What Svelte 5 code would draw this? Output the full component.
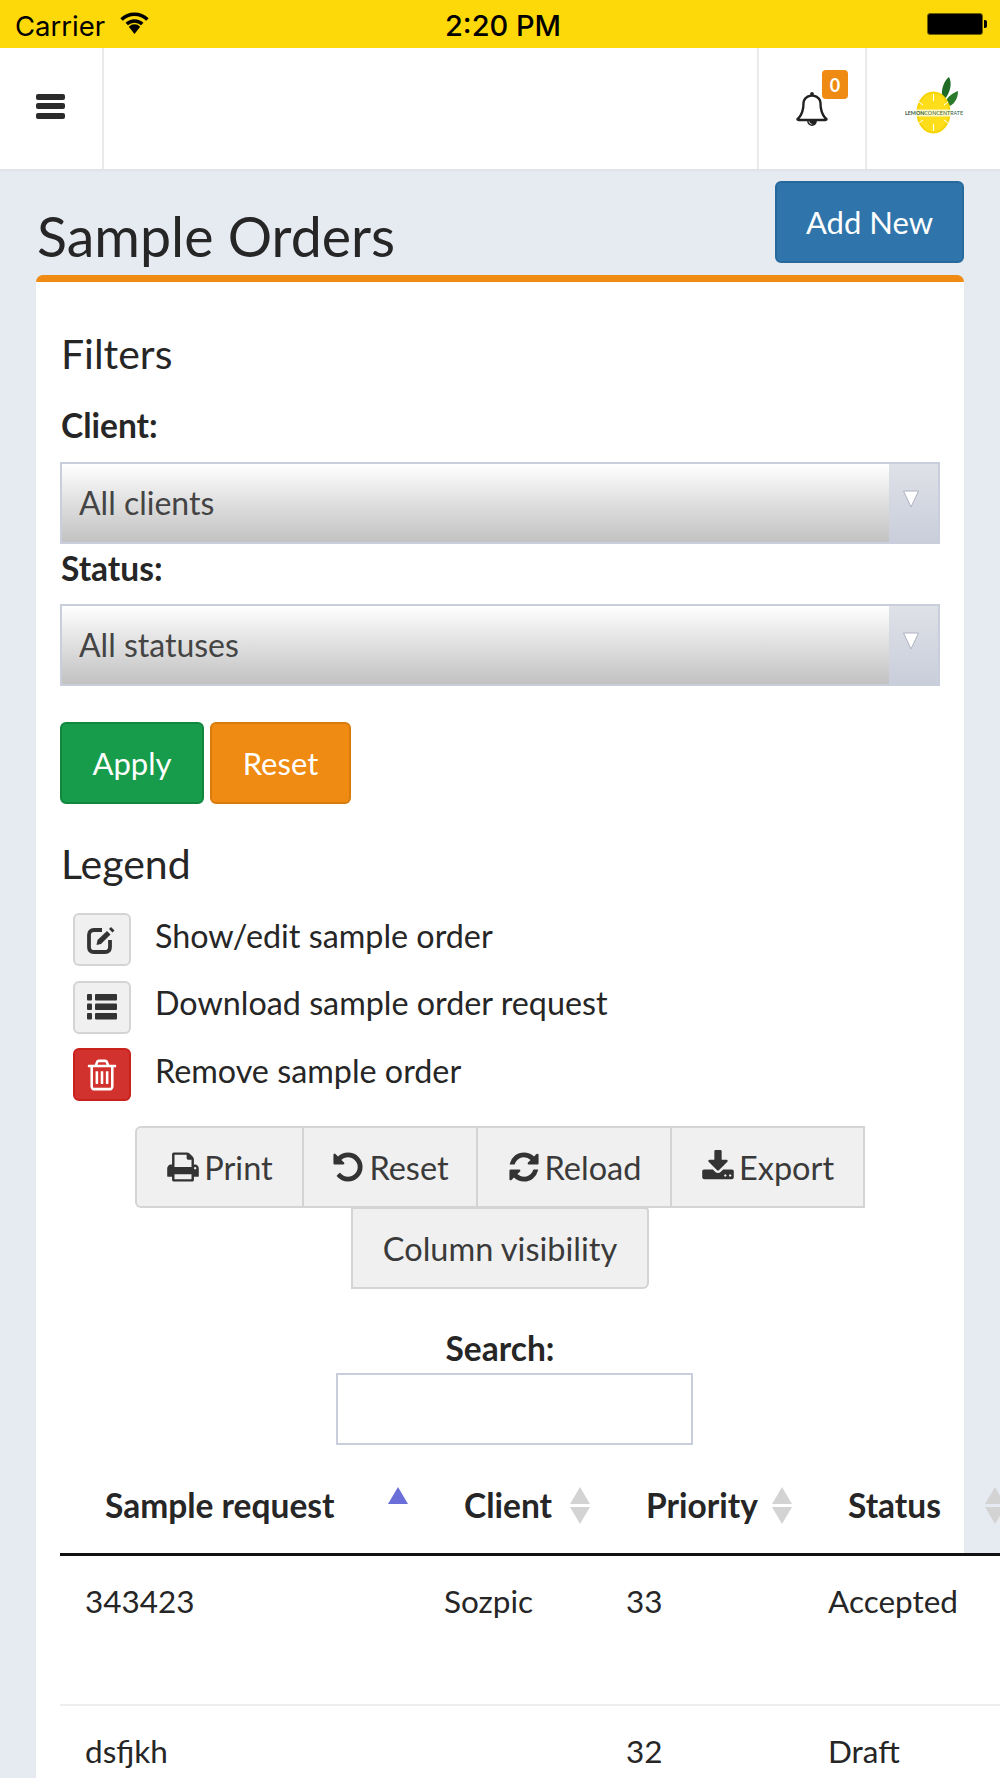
<script lang="ts">
	const legend = [
		{ label: 'Show/edit sample order', kind: 'edit' },
		{ label: 'Download sample order request', kind: 'list' },
		{ label: 'Remove sample order', kind: 'trash' },
	];
	const columns = [
		{ title: 'Sample request', sort: 'asc' },
		{ title: 'Client', sort: 'both' },
		{ title: 'Priority', sort: 'both' },
		{ title: 'Status', sort: 'both' },
	];
	const rows = [
		['343423', 'Sozpic', '33', 'Accepted'],
		['dsfjkh', '', '32', 'Draft'],
	];
	const paths: Record<string, string> = {
		bell: 'M912 1696q0-16-16-16-59 0-101.5-42.5t-42.5-101.5q0-16-16-16t-16 16q0 73 51.5 124.5t124.5 51.5q16 0 16-16zm-666-288h1300q-266-300-266-832 0-51-24-105t-69-103-121.5-80.5-169.5-31.5-169.5 31.5-121.5 80.5-69 103-24 105q0 532-266 832zm1482 0q0 52-38 90t-90 38h-448q0 106-75 181t-181 75-181-75-75-181h-448q-52 0-90-38t-38-90q50-42 91-88t85-119.5 74.5-158.5 50-206 19.5-260q0-152 117-282.5t307-158.5q-8-19-8-39 0-40 28-68t68-28 68 28 28 68q0 20-8 39 190 28 307 158.5t117 282.5q0 139 19.5 260t50 206 74.5 158.5 85 119.5 91 88z',
		trash: 'M704 736v576q0 14-9 23t-23 9h-64q-14 0-23-9t-9-23v-576q0-14 9-23t23-9h64q14 0 23 9t9 23zm256 0v576q0 14-9 23t-23 9h-64q-14 0-23-9t-9-23v-576q0-14 9-23t23-9h64q14 0 23 9t9 23zm256 0v576q0 14-9 23t-23 9h-64q-14 0-23-9t-9-23v-576q0-14 9-23t23-9h64q14 0 23 9t9 23zm128 724v-948h-896v948q0 22 7 40.5t14.5 27 10.5 8.5h832q3 0 10.5-8.5t14.5-27 7-40.5zm-672-1076h448l-48-117q-7-9-17-11h-317q-10 2-17 11zm928 32v64q0 14-9 23t-23 9h-96v948q0 83-47 143.5t-113 60.5h-832q-66 0-113-58.5t-47-141.5v-952h-96q-14 0-23-9t-9-23v-64q0-14 9-23t23-9h309l70-167q15-37 54-63t79-26h320q40 0 79 26t54 63l70 167h309q14 0 23 9t9 23z',
		print: 'M448 1536h896v-256h-896v256zm0-640h896v-384h-160q-40 0-68-28t-28-68v-160h-640v640zm1152 64q0-26-19-45t-45-19-45 19-19 45 19 45 45 19 45-19 19-45zm128 0v416q0 13-9.5 22.5t-22.5 9.5h-224v160q0 40-28 68t-68 28h-960q-40 0-68-28t-28-68v-160h-224q-13 0-22.5-9.5t-9.5-22.5v-416q0-79 56.5-135.5t135.5-56.5h64v-544q0-40 28-68t68-28h672q40 0 88 20t76 48l152 152q28 28 48 76t20 88v256h64q79 0 135.5 56.5t56.5 135.5z',
		undo: 'M1664 896q0 156-61 298t-164 245-245 164-298 61q-172 0-327-72.5t-264-204.5q-7-10-6.5-22.5t8.5-20.5l137-138q10-9 25-9 16 2 23 12 73 95 179 147t225 52q104 0 198.5-40.5t163.5-109.5 109.5-163.5 40.5-198.5-40.5-198.5-109.5-163.5-163.5-109.5-198.5-40.5q-98 0-188 35.5t-160 101.5l137 138q31 30 14 69-17 40-59 40h-448q-26 0-45-19t-19-45v-448q0-42 40-59 39-17 69 14l130 129q107-101 244.5-156.5t284.5-55.5q156 0 298 61t245 164 164 245 61 298z',
		refresh: 'M1639 1056q0 5-1 7-64 268-268 434.5t-478 166.5q-146 0-282.5-55t-243.5-157l-129 129q-19 19-45 19t-45-19-19-45v-448q0-26 19-45t45-19h448q26 0 45 19t19 45-19 45l-137 137q71 66 161 102t187 36q134 0 250-65t186-179q11-17 53-117 8-23 30-23h192q13 0 22.5 9.5t9.5 22.5zm25-800v448q0 26-19 45t-45 19h-448q-26 0-45-19t-19-45 19-45l138-138q-148-137-349-137-134 0-250 65t-186 179q-11 17-53 117-8 23-30 23h-199q-13 0-22.5-9.5t-9.5-22.5v-7q65-268 270-434.5t480-166.5q146 0 284 55.5t245 156.5l130-129q19-19 45-19t45 19 19 45z',
		download: 'M1344 1344q0-26-19-45t-45-19-45 19-19 45 19 45 45 19 45-19 19-45zm256 0q0-26-19-45t-45-19-45 19-19 45 19 45 45 19 45-19 19-45zm128-224v320q0 40-28 68t-68 28h-1472q-40 0-68-28t-28-68v-320q0-40 28-68t68-28h465l135 136q58 56 136 56t136-56l136-136h464q40 0 68 28t28 68zm-325-569q17 41-14 70l-448 448q-18 19-45 19t-45-19l-448-448q-31-29-14-70 17-39 59-39h256v-448q0-26 19-45t45-19h256q26 0 45 19t19 45v448h256q42 0 59 39z',
	};
	const tools = [
		{ label: 'Print', icon: 'print' },
		{ label: 'Reset', icon: 'undo' },
		{ label: 'Reload', icon: 'refresh' },
		{ label: 'Export', icon: 'download' },
	];
</script>

<div class="screen">
	<div class="statusbar">
		<div class="sb-left">
			<span>Carrier</span>
			<svg class="wifi" viewBox="0 0 28 22" width="29" height="23">
				<path d="M1.5 8 A18 18 0 0 1 26.500 8" fill="none" stroke="#000" stroke-width="3.400" />
				<path d="M6.500 12.500 A11 11 0 0 1 21.500 12.500" fill="none" stroke="#000" stroke-width="3.400" />
				<path d="M8.500 15 L14 22 L19.500 15 A8 8 0 0 0 8.500 15 Z" fill="#000" />
			</svg>
		</div>
		<div class="sb-time">2:20 PM</div>
		<div class="battery"><span class="battery-body"></span><span class="battery-nub"></span></div>
	</div>

	<nav class="navbar">
		<div class="nav-cell burger">
			<span></span><span></span><span></span>
		</div>
		<div class="nav-fill"></div>
		<div class="nav-cell bell">
			<svg viewBox="0 0 1792 1792" width="34" height="34"><path d={paths.bell} fill="#222" /></svg>
			<span class="count">0</span>
		</div>
		<div class="nav-cell logo">
			<svg viewBox="0 0 60 64" width="60" height="64">
				<path d="M37 20 C36 10 40 3 44 0 C47 6 46 14 40 22 Z" fill="#1d6b25" />
				<path d="M41 24 C43 19 48 16 53 14 C53 21 50 26 45 29 Z" fill="#2a7a2c" />
				<ellipse cx="28.500" cy="35.500" rx="16" ry="20" fill="#fede1b" stroke="#f6d400" stroke-width="2" />
				<path d="M28.500 17 V24 M28.500 47 V54 M14 25 L18 28 M43 25 L39 28 M14 46 L18 43 M43 46 L39 43" stroke="#fff" stroke-width="1" />
				<rect x="0" y="32.500" width="60" height="7" fill="#fff" opacity="0.75" />
				<text x="0" y="38" class="logo-text" textLength="58" lengthAdjust="spacingAndGlyphs"><tspan font-weight="700">LEMON</tspan>CONCENTRATE</text>
			</svg>
		</div>
	</nav>

	<main class="page">
		<header class="page-head">
			<h1>Sample Orders</h1>
			<button class="btn primary add">Add New</button>
		</header>

		<section class="card">
			<h2>Filters</h2>
			<label class="field-label" for="client">Client:</label>
			<div class="select">
				<select id="client"><option>All clients</option></select>
				<span class="select-arrow">
					<svg viewBox="0 0 18 18" width="18" height="18"><path d="M1.500 1 H16.500 L9 17 Z" fill="#fff" stroke="#aeb3c0" stroke-width="1" /></svg>
				</span>
			</div>
			<label class="field-label status-label" for="status">Status:</label>
			<div class="select">
				<select id="status"><option>All statuses</option></select>
				<span class="select-arrow">
					<svg viewBox="0 0 18 18" width="18" height="18"><path d="M1.500 1 H16.500 L9 17 Z" fill="#fff" stroke="#aeb3c0" stroke-width="1" /></svg>
				</span>
			</div>

			<div class="actions">
				<button class="btn success">Apply</button>
				<button class="btn warning">Reset</button>
			</div>

			<h2 class="legend-title">Legend</h2>
			<ul class="legend">
				{#each legend as item}
					<li>
						<span class="legend-icon" class:danger={item.kind === 'trash'}>
							{#if item.kind === 'edit'}
								<svg viewBox="0 0 30 28" width="30" height="28">
									<path d="M15 4 H7 Q2 4 2 9 V21 Q2 26 7 26 H18 Q23 26 23 21 V14" fill="none" stroke="#333" stroke-width="3.800" />
									<path d="M9.500 19 L10.500 14 L20 5 L23.500 8.500 L14 18 Z" fill="#333" />
									<path d="M22 3 L24 1 L27.500 4.500 L25.500 6.500 Z" fill="#333" />
								</svg>
							{:else if item.kind === 'list'}
								<svg viewBox="0 0 30 26" width="30" height="26">
									<rect x="0" y="0" width="5" height="6.500" rx="1" /><rect x="8" y="0" width="22" height="6.500" rx="1" />
									<rect x="0" y="9.500" width="5" height="6.500" rx="1" /><rect x="8" y="9.500" width="22" height="6.500" rx="1" />
									<rect x="0" y="19" width="5" height="6.500" rx="1" /><rect x="8" y="19" width="22" height="6.500" rx="1" />
								</svg>
							{:else}
								<svg viewBox="0 0 1792 1792" width="36" height="36"><path d={paths.trash} /></svg>
							{/if}
						</span>
						<span class="legend-label">{item.label}</span>
					</li>
				{/each}
			</ul>

			<div class="toolbar">
				<div class="tool-row">
					{#each tools as tool}
						<button class="tool">
							<svg viewBox="0 0 1792 1792" width="34" height="34"><path d={paths[tool.icon]} /></svg>
							{tool.label}
						</button>
					{/each}
				</div>
				<button class="tool single">Column visibility</button>
			</div>

			<div class="search">
				<label for="q">Search:</label>
				<input id="q" type="search" />
			</div>

			<table>
				<colgroup><col class="c1" /><col class="c2" /><col class="c3" /><col class="c4" /></colgroup>
				<thead>
					<tr>
						{#each columns as col}
							<th>
								{col.title}
								<span class="up" class:active={col.sort === 'asc'}></span>
								{#if col.sort === 'both'}<span class="down"></span>{/if}
							</th>
						{/each}
					</tr>
				</thead>
				<tbody>
					{#each rows as row}
						<tr>
							{#each row as cell}<td>{cell}</td>{/each}
						</tr>
					{/each}
				</tbody>
			</table>
		</section>
	</main>
</div>

<style>
	:global(body) { margin: 0; }
	.screen {
		width: 1000px; height: 1778px; overflow: hidden; background: #e6ebf2;
		font-family: Lato, "Open Sans", sans-serif; color: #262626;
	}

	.statusbar {
		height: 48px; background: #fed90a; color: #000; display: grid; grid-template-columns: 1fr auto 1fr;
		align-items: center; padding: 3px 13px 0 15px; box-sizing: border-box; font-family: Inter, sans-serif; font-size: 27.500px;
	}
	.sb-left { display: flex; align-items: center; gap: 15px; }
	.wifi { margin-top: -6px; }
	.sb-time { font-weight: 500; font-size: 29px; margin-left: 4px; }
	.battery { justify-self: end; display: flex; align-items: center; gap: 1px; margin-top: -3px; }
	.battery-body { width: 56px; height: 22px; background: #000; border: 1px solid #6f6100; border-radius: 3px; box-sizing: border-box; }
	.battery-nub { width: 3px; height: 8px; background: #000; border-radius: 0 2px 2px 0; }

	.navbar { height: 121px; background: #fff; display: flex; box-shadow: 0 2px 2px #dde1e8; position: relative; }
	.nav-cell { display: flex; align-items: center; justify-content: center; position: relative; }
	.burger { width: 104px; border-right: 2px solid #eaeaea; flex-direction: column; gap: 3.500px; padding: 0 2px 5px 0; box-sizing: border-box; }
	.burger span { width: 29px; height: 6px; background: #2b2b2b; border-radius: 2px; }
	.nav-fill { flex: 1; }
	.bell { width: 108px; border-left: 2px solid #eaeaea; box-sizing: border-box; }
	.count {
		position: absolute; left: 63px; top: 22px; width: 26px; height: 29px; border-radius: 4px; background: #ef8b12;
		color: #fff; font-size: 18px; font-weight: 700; display: flex; align-items: center; justify-content: center;
	}
	.logo { width: 135px; border-left: 2px solid #eaeaea; justify-content: flex-start; padding-left: 38px; box-sizing: border-box; }
	.logo svg { overflow: visible; }
	.logo-text { font-size: 5.400px; fill: #2e5c37; font-family: Lato, sans-serif; }

	.page { padding: 12px 36px 0; }
	.page-head { display: flex; justify-content: space-between; align-items: flex-start; }
	h1 { font-size: 55.500px; font-weight: 400; line-height: 55px; margin: 27px 0 0 1px; }
	.btn { border-radius: 6px; color: #fff; font: inherit; font-size: 31px; height: 82px; box-sizing: border-box; }
	.primary { background: #2f75ab; border: 2px solid #28699b; }
	.add { width: 189px; }

	.card {
		margin-top: 12px; background: #fff; border-top: 7px solid #ef8b12; border-radius: 7px 7px 0 0;
		padding: 50px 24px 0; height: 1600px; box-sizing: border-box; box-shadow: 0 1px 2px #dfe3ea;
	}
	h2 { font-size: 41px; font-weight: 400; line-height: 44px; margin: 0 0 0 1px; }
	.field-label { display: block; font-size: 33.500px; font-weight: 700; line-height: 36px; margin: 31px 0 19px 1px; }
	.status-label { margin: 6px 0 18px 1px; }
	.select { position: relative; height: 82px; }
	select {
		display: block; width: 100%; height: 100%; appearance: none; border: 2px solid #c9cedc; border-radius: 0;
		background: linear-gradient(#fff 0%, #e2e2e2 45%, #c2c2c2 100%); padding: 0 0 1px 17px;
		font: inherit; font-size: 32px; color: #444;
	}
	.select-arrow {
		position: absolute; right: 2px; top: 2px; bottom: 2px; width: 49px;
		background: linear-gradient(#dfe1e7, #c9cedb); display: flex; justify-content: center;
		padding: 26px 5px 0 0; box-sizing: border-box;
	}

	.actions { display: flex; gap: 6px; margin-top: 36px; }
	.success { width: 144px; background: #169c4b; border: 2px solid #12873f; }
	.warning { width: 141px; background: #ef8b12; border: 2px solid #d97c0c; }

	.legend-title { margin-top: 38px; }
	.legend { list-style: none; margin: 27px 0 0 13px; padding: 0; font-size: 32.300px; }
	.legend li { display: flex; align-items: center; gap: 24px; height: 53px; margin-bottom: 14.500px; }
	.legend-label { padding-bottom: 9px; }
	.legend-icon {
		width: 58px; height: 53px; box-sizing: border-box; border: 2px solid #d4d4d4; border-radius: 6px; background: #f0f0f0;
		display: flex; align-items: center; justify-content: center; fill: #333;
	}
	.legend-icon.danger { background: #d2322d; border-color: #c9211c; fill: #fff; }

	.toolbar { display: flex; flex-direction: column; align-items: center; margin-top: 25px; }
	.tool-row { display: grid; grid-template-columns: 169px 174px 194px 193px; }
	.tool {
		height: 82px; box-sizing: border-box; padding: 0; background: #f0f0f0; border: 2px solid #d4d4d4; border-left-width: 0;
		font: inherit; font-size: 32.500px; color: #3a3a3a; display: flex; align-items: center; justify-content: center; gap: 4px;
	}
	.tool:first-child { border-left-width: 2px; border-radius: 6px 0 0 6px; }
	.tool svg { fill: #333; }
	.tool.single { margin-top: -1px; border-left-width: 2px; border-radius: 0 4px 6px 0; width: 298px; }

	.search { display: flex; flex-direction: column; align-items: center; margin-top: 34px; }
	.search label { font-size: 33.500px; font-weight: 700; line-height: 50px; }
	.search input {
		width: 357px; height: 72px; box-sizing: border-box; border: 2px solid #c9cedc; margin: 0 0 0 29px; background: #fff; border-radius: 0;
	}

	table { border-collapse: collapse; table-layout: fixed; width: 956px; margin-top: 0; }
	.c1 { width: 359px; } .c2 { width: 182px; } .c3 { width: 202px; } .c4 { width: 213px; }
	th {
		position: relative; text-align: left; font-size: 33.500px; font-weight: 700; padding: 30px 0 18px 45px; line-height: 60px;
		border-bottom: 3px solid #111;
	}
	td { background: #fff; font-size: 31.500px; height: 150px; box-sizing: border-box; vertical-align: top; padding: 26px 0 0 25px; border-bottom: 2px solid #eee; }
	.up, .down {
		position: absolute; right: 11px; width: 0; height: 0; border-left: 10px solid transparent; border-right: 10px solid transparent;
	}
	.up { top: 42px; border-bottom: 17px solid #d3d3d3; }
	.up.active { border-bottom-color: #6a6ed8; }
	.down { top: 62px; border-top: 17px solid #d3d3d3; }
</style>
